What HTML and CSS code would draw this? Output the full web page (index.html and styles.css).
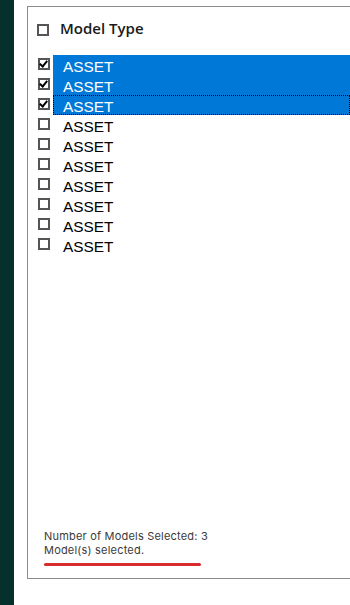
FILE: index.html
```html
<!DOCTYPE html>
<html lang="en">
<head>
    <meta charset="UTF-8">
    <meta name="viewport" content="width=device-width, initial-scale=1.0">
    <title>Model Type</title>
    <link rel="stylesheet" href="styles.css">
</head>
<body>
    <div class="page">
        <div class="sidebar"></div>
        <div class="panel">
            <div class="panel-header">
                <span class="box"></span>
                <h2>Model Type</h2>
            </div>

            <ul class="model-list">
                <li class="model-row"><span class="box checked"></span><span class="item selected">ASSET</span></li>
                <li class="model-row"><span class="box checked"></span><span class="item selected">ASSET</span></li>
                <li class="model-row"><span class="box checked"></span><span class="item selected focused">ASSET</span></li>
                <li class="model-row"><span class="box"></span><span class="item">ASSET</span></li>
                <li class="model-row"><span class="box"></span><span class="item">ASSET</span></li>
                <li class="model-row"><span class="box"></span><span class="item">ASSET</span></li>
                <li class="model-row"><span class="box"></span><span class="item">ASSET</span></li>
                <li class="model-row"><span class="box"></span><span class="item">ASSET</span></li>
                <li class="model-row"><span class="box"></span><span class="item">ASSET</span></li>
                <li class="model-row"><span class="box"></span><span class="item">ASSET</span></li>
            </ul>

            <div class="summary">
                <p>Number of Models Selected: 3</p>
                <p>Model(s) selected.</p>
                <div class="underline"></div>
            </div>
        </div>
    </div>
</body>
</html>
```

FILE: styles.css
```css
body {
    margin: 0;
    background-color: #fff;
    overflow: hidden;
}
.page {
    display: flex;
    height: 605px;
}
.sidebar {
    width: 14px;
    flex-shrink: 0;
    background-color: #06302b;
}
.panel {
    display: flex;
    flex-direction: column;
    flex: 1;
    height: 571px;
    margin: 6px 0 0 13px;
    border: 1px solid #8c8c8c;
    border-right: none;
}
.panel-header {
    display: flex;
    align-items: center;
    height: 20px;
    padding: 13px 0 0 9px;
}
.panel-header h2 {
    margin: 0 0 0 11px;
    font-family: "Open Sans", sans-serif;
    font-size: 15px;
    font-weight: 600;
    color: #1a1a1a;
    position: relative;
    top: -2px;
}
.box {
    display: inline-block;
    width: 8px;
    height: 8px;
    border: 2px solid #555;
    background-color: #fff;
    flex-shrink: 0;
    position: relative;
}
.box.checked::after {
    content: "";
    position: absolute;
    left: 1px;
    top: -1px;
    width: 3px;
    height: 6px;
    border: solid #000;
    border-width: 0 2px 2px 0;
    transform: rotate(40deg);
}
.model-list {
    list-style: none;
    margin: 15px 0 0 0;
    padding: 0;
}
.model-row {
    display: flex;
    align-items: center;
    height: 20px;
    padding-left: 10px;
}
.model-row .box {
    top: -1px;
}
.item {
    flex: 1;
    height: 20px;
    margin-left: 3px;
    padding-left: 10px;
    font-family: "Liberation Sans", Arial, sans-serif;
    font-size: 15.4px;
    line-height: 24px;
    color: #000;
    box-sizing: border-box;
    overflow: hidden;
}
.item.selected {
    background-color: #0078d7;
    color: #fff;
}
.item.focused {
    outline: 1px dotted #000;
    outline-offset: -1px;
}
.summary {
    margin-top: auto;
    padding: 0 0 12px 16px;
    font-family: Inter, "Noto Sans", sans-serif;
    font-size: 11px;
    letter-spacing: 0.2px;
    color: #3a3a3a;
}
.summary p {
    margin: 0;
    line-height: 14px;
}
.underline {
    width: 157px;
    height: 3px;
    margin-top: 6px;
    border-radius: 2px;
    background-color: #d82b2b;
}
```
